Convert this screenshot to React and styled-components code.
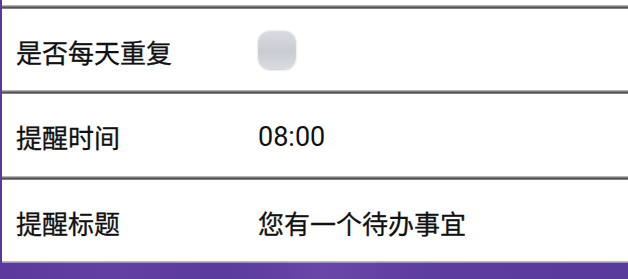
import styled, { createGlobalStyle } from "styled-components";

const GlobalStyle = createGlobalStyle`
  html, body {
    margin: 0;
    padding: 0;
    background: #5a3b9d;
    overflow: hidden;
  }
`;

const Screen = styled.div`
  width: 628px;
  height: 279px;
  box-sizing: border-box;
  padding-left: 2px;
  display: flex;
  flex-direction: column;
  background: linear-gradient(90deg, #5b399c 0%, #6340a3 18%, #5a3a9d 35%, #6946a8 52%, #5d3c9f 70%, #583a9b 100%);
  font-family: "Noto Sans CJK SC", "Noto Sans", sans-serif;
`;

const Row = styled.div`
  height: ${({ h }) => h}px;
  flex-shrink: 0;
  background: #ffffff;
  display: flex;
  align-items: center;
  padding-left: 14px;
  box-sizing: border-box;
`;

const Divider = styled.div`
  height: 4px;
  flex-shrink: 0;
  background: linear-gradient(180deg, #d6d6d6 0%, #8a8a8a 30%, #4f4f4f 60%, #9a9a9a 100%);
`;

const BottomShadow = styled.div`
  height: 2px;
  flex-shrink: 0;
  background: linear-gradient(180deg, #c9c9c9 0%, #8c8c8c 100%);
`;

const Label = styled.div`
  width: 242px;
  font-size: 26px;
  color: #111111;
  line-height: 1;
  margin-top: 4px;
  -webkit-text-stroke: 0.3px #111111;
`;

const Value = styled.div`
  font-size: ${({ latin }) => (latin ? 27 : 26)}px;
  color: #111111;
  line-height: 1;
  margin-top: 4px;
  -webkit-text-stroke: ${({ latin }) => (latin ? "0" : "0.3px")} #111111;
  font-family: ${({ latin }) => (latin ? "Roboto, sans-serif" : "inherit")};
`;

const CheckBox = styled.div`
  width: 38px;
  height: 39px;
  border-radius: 12px;
  background: linear-gradient(180deg, #dadce1 0%, #caccd3 55%, #d9dbe0 100%);
  box-shadow: 0 1px 2px rgba(0, 0, 0, 0.22), inset 0 1px 1px rgba(255, 255, 255, 0.7);
`;

export default function App() {
  return (
    <>
      <GlobalStyle />
      <Screen>
        <Row h={5} />
        <Divider />
        <Row h={81}>
          <Label>是否每天重复</Label>
          <CheckBox />
        </Row>
        <Divider />
        <Row h={82}>
          <Label>提醒时间</Label>
          <Value latin>08:00</Value>
        </Row>
        <Divider />
        <Row h={81}>
          <Label>提醒标题</Label>
          <Value>您有一个待办事宜</Value>
        </Row>
        <BottomShadow />
      </Screen>
    </>
  );
}
